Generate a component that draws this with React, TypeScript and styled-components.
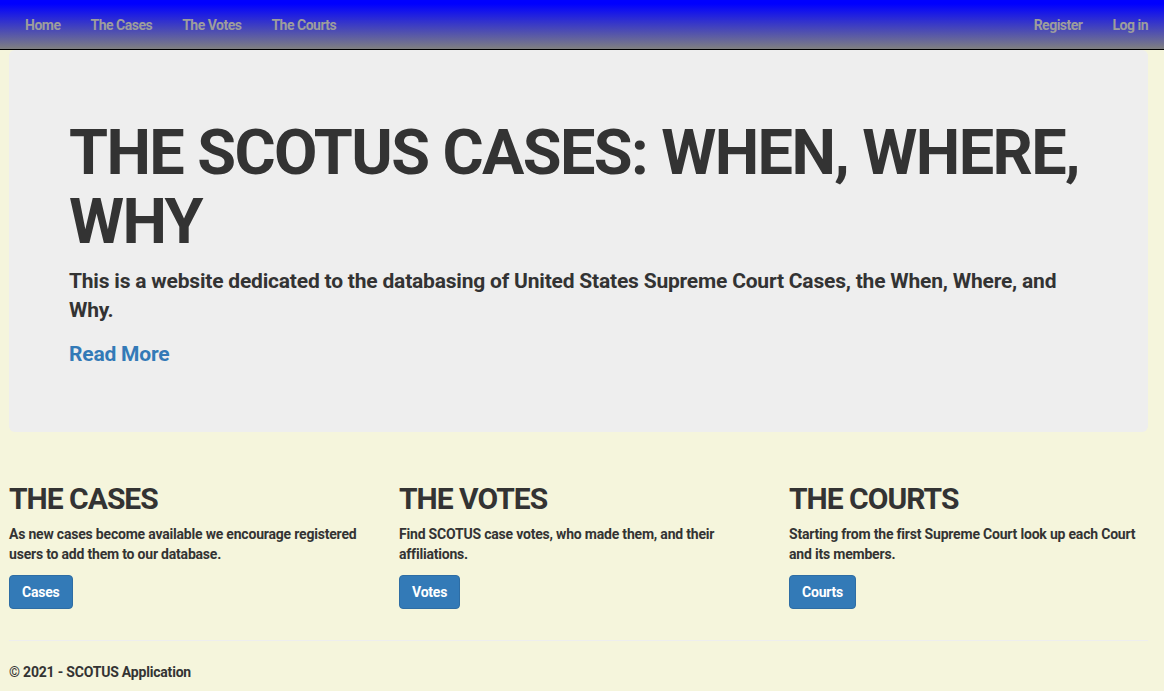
import React from "react";
import styled, { createGlobalStyle } from "styled-components";

const GlobalStyle = createGlobalStyle`
  html, body {
    margin: 0;
    padding: 0;
  }
  body {
    background-color: beige;
    color: #333;
    font-family: Roboto, "Liberation Sans", Arial, sans-serif;
    font-weight: bold;
    font-size: 14px;
    line-height: 1.42857;
    letter-spacing: -0.2px;
  }
  * {
    box-sizing: border-box;
  }
`;

const Navbar = styled.nav`
  height: 50px;
  display: flex;
  justify-content: space-between;
  padding: 0 1px 0 10px;
  background: linear-gradient(to bottom, #0000ff 8%, #808080 100%);
  border-bottom: 1px solid #000;
`;

const NavGroup = styled.ul`
  display: flex;
  margin: 0;
  padding: 0;
  list-style: none;
`;

const NavLink = styled.a`
  display: block;
  padding: 15px;
  line-height: 20px;
  font-size: 14px;
  letter-spacing: -0.5px;
  color: #9d9d9d;
  text-decoration: none;
  cursor: pointer;
`;

const BodyContent = styled.div`
  padding: 0 16px 0 9px;
`;

const Jumbotron = styled.div`
  background-color: #eee;
  padding: 48px 60px 47px;
  margin-bottom: 30px;
  border-radius: 6px;
  h1 {
    font-size: 63px;
    line-height: 1.1;
    letter-spacing: -1.6px;
    margin: 20px 0 10px;
  }
  p {
    font-size: 21px;
    line-height: 1.4;
    margin: 0 0 15px;
  }
`;

const ReadMore = styled.a`
  color: #337ab7;
  text-decoration: none;
  cursor: pointer;
`;

const Row = styled.div`
  display: grid;
  grid-template-columns: repeat(3, 390px);
  margin: 0 -15px;
`;

const Col = styled.div`
  padding: 0 15px;
  h2 {
    font-size: 30px;
    line-height: 1.1;
    letter-spacing: -1px;
    margin: 20px 0 10px;
  }
  p {
    margin: 0 0 10px;
  }
`;

const Button = styled.a`
  display: inline-block;
  padding: 6px 12px;
  font-size: 14px;
  line-height: 20px;
  color: #fff;
  background-color: #337ab7;
  border: 1px solid #2e6da4;
  border-radius: 4px;
  text-decoration: none;
  cursor: pointer;
`;

const Rule = styled.hr`
  margin: 21px 0 22px;
  border: 0;
  border-top: 1px solid #eee;
`;

const Footer = styled.footer`
  p {
    margin: 0 0 10px;
  }
`;

const sections = [
  {
    title: "THE CASES",
    text: "As new cases become available we encourage registered users to add them to our database.",
    button: "Cases",
  },
  {
    title: "THE VOTES",
    text: "Find SCOTUS case votes, who made them, and their affiliations.",
    button: "Votes",
  },
  {
    title: "THE COURTS",
    text: "Starting from the first Supreme Court look up each Court and its members.",
    button: "Courts",
  },
];

export default function App() {
  return (
    <>
      <GlobalStyle />
      <Navbar>
        <NavGroup>
          <li><NavLink>Home</NavLink></li>
          <li><NavLink>The Cases</NavLink></li>
          <li><NavLink>The Votes</NavLink></li>
          <li><NavLink>The Courts</NavLink></li>
        </NavGroup>
        <NavGroup>
          <li><NavLink>Register</NavLink></li>
          <li><NavLink>Log in</NavLink></li>
        </NavGroup>
      </Navbar>
      <BodyContent>
        <Jumbotron>
          <h1>THE SCOTUS CASES: WHEN, WHERE, WHY</h1>
          <p>
            This is a website dedicated to the databasing of United States Supreme
            Court Cases, the When, Where, and Why.
          </p>
          <p>
            <ReadMore>Read More</ReadMore>
          </p>
        </Jumbotron>
        <Row>
          {sections.map((s) => (
            <Col key={s.title}>
              <h2>{s.title}</h2>
              <p>{s.text}</p>
              <p>
                <Button>{s.button}</Button>
              </p>
            </Col>
          ))}
        </Row>
        <Rule />
        <Footer>
          <p>&copy; 2021 - SCOTUS Application</p>
        </Footer>
      </BodyContent>
    </>
  );
}
